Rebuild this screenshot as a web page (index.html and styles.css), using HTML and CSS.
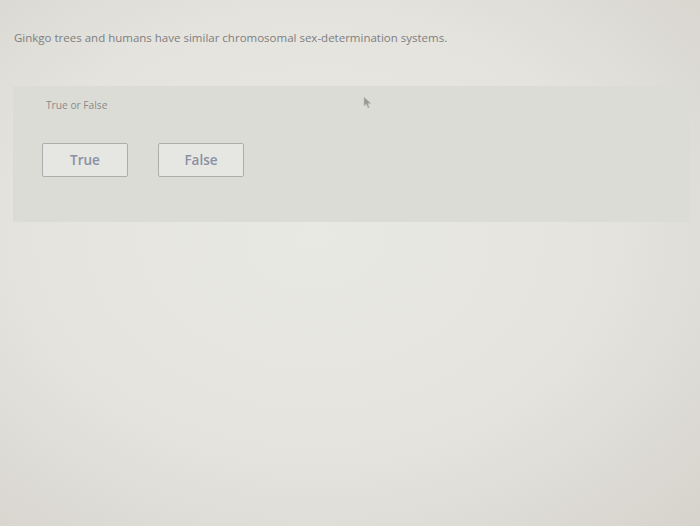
FILE: index.html
```html
<!DOCTYPE html>
<html lang="en">
<head>
    <meta charset="UTF-8">
    <meta name="viewport" content="width=device-width, initial-scale=1.0">
    <title>True or False</title>
    <link rel="stylesheet" href="styles.css">
</head>
<body>

    <div class="page">
        <p class="question">Ginkgo trees and humans have similar chromosomal sex-determination systems.</p>

        <!-- Answer panel -->
        <div class="panel">
            <p class="prompt">True or False</p>
            <div class="choices">
                <button type="button" class="choice">True</button>
                <button type="button" class="choice">False</button>
            </div>

            <!-- mouse pointer caught in the photo -->
            <svg class="pointer" width="9" height="13" viewBox="0 0 9 13">
                <path d="M1 1 L1 10 L3.3 8 L5 12 L6.4 11.4 L4.8 7.6 L8 7.6 Z" fill="#989896" stroke="#c0c0bc" stroke-width="0.6"/>
            </svg>
        </div>
    </div>

</body>
</html>
```

FILE: styles.css
```css
/* Styling */
* {
    box-sizing: border-box;
    margin: 0;
    padding: 0;
}
body {
    font-family: "Open Sans", Lato, sans-serif;
    background: radial-gradient(ellipse at 45% 45%, #e9e9e4 0%, #e4e3de 55%, #d6d3cc 100%);
    min-height: 100vh;
}
.page {
    padding: 30px 10px 0 13px;
}
.question {
    font-size: 11.5px;
    color: #7e7e7e;
    padding-left: 1px;
    line-height: 16px;
}
.panel {
    position: relative;
    margin-top: 40px;
    height: 136px;
    background-color: #dcdcd7;
    padding: 12px 0 0 33px;
}
.prompt {
    font-size: 10.2px;
    color: #8a8a8a;
    line-height: 14px;
}
.choices {
    display: flex;
    gap: 30px;
    margin-top: 31px;
    margin-left: -4px;
}
.choice {
    width: 86px;
    height: 34px;
    border: 1px solid #adadab;
    border-radius: 2px;
    background-color: #e6e6e2;
    font-family: "Open Sans", Lato, sans-serif;
    font-size: 13.5px;
    font-weight: 600;
    color: #8a90a2;
}
.pointer {
    position: absolute;
    left: 350px;
    top: 10px;
}
```
